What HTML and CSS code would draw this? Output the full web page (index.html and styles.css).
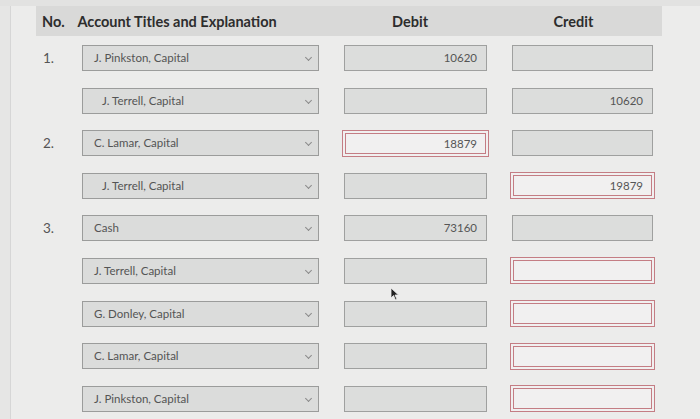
FILE: index.html
```html
<!DOCTYPE html>
<html>
<head>
<meta charset="utf-8">
<link rel="stylesheet" href="styles.css">
</head>
<body>
<div class="topband"></div>
<div class="page">
  <div class="sidebar"></div>
  <div class="sheet">
    <div class="head">
      <div class="h-no">No.</div>
      <div class="h-acct">Account Titles and Explanation</div>
      <div class="h-dr">Debit</div>
      <div class="h-cr">Credit</div>
    </div>

    <div class="rows">
      <div class="row">
        <div class="c-no">1.</div>
        <div class="c-acct"><div class="sel">J. Pinkston, Capital<span class="chev"></span></div></div>
        <div class="c-dr"><div class="inp">10620</div></div>
        <div class="c-cr"><div class="inp"></div></div>
      </div>
      <div class="row">
        <div class="c-no"></div>
        <div class="c-acct"><div class="sel ind">J. Terrell, Capital<span class="chev"></span></div></div>
        <div class="c-dr"><div class="inp"></div></div>
        <div class="c-cr"><div class="inp">10620</div></div>
      </div>

      <div class="row">
        <div class="c-no">2.</div>
        <div class="c-acct"><div class="sel">C. Lamar, Capital<span class="chev"></span></div></div>
        <div class="c-dr"><div class="inp err">18879</div></div>
        <div class="c-cr"><div class="inp"></div></div>
      </div>
      <div class="row">
        <div class="c-no"></div>
        <div class="c-acct"><div class="sel ind">J. Terrell, Capital<span class="chev"></span></div></div>
        <div class="c-dr"><div class="inp"></div></div>
        <div class="c-cr"><div class="inp err">19879</div></div>
      </div>

      <div class="row">
        <div class="c-no">3.</div>
        <div class="c-acct"><div class="sel">Cash<span class="chev"></span></div></div>
        <div class="c-dr"><div class="inp">73160</div></div>
        <div class="c-cr"><div class="inp"></div></div>
      </div>
      <div class="row">
        <div class="c-no"></div>
        <div class="c-acct"><div class="sel">J. Terrell, Capital<span class="chev"></span></div></div>
        <div class="c-dr"><div class="inp"></div></div>
        <div class="c-cr"><div class="inp err"></div></div>
      </div>
      <div class="row">
        <div class="c-no"></div>
        <div class="c-acct"><div class="sel">G. Donley, Capital<span class="chev"></span></div></div>
        <div class="c-dr"><div class="inp"></div></div>
        <div class="c-cr"><div class="inp err"></div></div>
      </div>
      <div class="row">
        <div class="c-no"></div>
        <div class="c-acct"><div class="sel">C. Lamar, Capital<span class="chev"></span></div></div>
        <div class="c-dr"><div class="inp"></div></div>
        <div class="c-cr"><div class="inp err"></div></div>
      </div>
      <div class="row">
        <div class="c-no"></div>
        <div class="c-acct"><div class="sel">J. Pinkston, Capital<span class="chev"></span></div></div>
        <div class="c-dr"><div class="inp"></div></div>
        <div class="c-cr"><div class="inp err"></div></div>
      </div>
    </div>
  </div>
</div>
<svg class="cursor" width="10" height="14" viewBox="0 0 10 14"><path d="M1 1 L1 11 L3.5 8.5 L5.5 13 L7 12.3 L5 8 L8.5 8 Z" fill="#222" stroke="#eee" stroke-width="0.8"/></svg>
</body>
</html>
```

FILE: styles.css
```css
html, body {
  margin: 0;
  padding: 0;
}
body {
  width: 700px;
  height: 419px;
  overflow: hidden;
  background: #ececeb;
  font-family: Lato, "Open Sans", sans-serif;
  position: relative;
}
.topband {
  height: 6px;
  background: #e2e2e1;
}
.page {
  display: flex;
}
.sidebar {
  width: 10px;
  margin-right: 25px;
  border-right: 1px solid #d6d6d6;
  background: #e6e6e5;
  height: 413px;
}
.sheet {
  width: 626px;
}
.head {
  display: flex;
  align-items: center;
  height: 30px;
  background: #d9d9d8;
  font-weight: 700;
  font-size: 14.5px;
  color: #2d2d2d;
}
.h-no {
  width: 42px;
  padding-left: 6px;
  box-sizing: border-box;
}
.h-acct {
  width: 262px;
}
.h-dr, .h-cr {
  text-align: center;
}
.h-dr { width: 152px; }
.h-cr { width: 180px; }

.rows {
  padding-top: 9px;
  display: flex;
  flex-direction: column;
  gap: 16.6px;
}
.row {
  display: flex;
  align-items: center;
  height: 26px;
}
.c-no {
  width: 46px;
  padding-left: 7px;
  box-sizing: border-box;
  font-size: 13.5px;
  color: #555;
}
.c-acct {
  width: 262px;
}
.c-dr {
  width: 168px;
}
.c-cr {
  width: 141px;
}
.sel {
  position: relative;
  width: 237px;
  height: 26px;
  box-sizing: border-box;
  border: 1px solid #9b9c9b;
  background: #dbdcdb;
  font-size: 11.5px;
  color: #545454;
  line-height: 24px;
  padding-left: 11px;
}
.sel.ind {
  padding-left: 19px;
}
.chev {
  position: absolute;
  right: 7px;
  top: 9px;
  width: 4px;
  height: 4px;
  border-right: 1.3px solid #8a8a8a;
  border-bottom: 1.3px solid #8a8a8a;
  transform: rotate(45deg);
}
.inp {
  width: 143px;
  height: 26px;
  box-sizing: border-box;
  border: 1px solid #9fa09f;
  background: #dcdddc;
  font-size: 11.5px;
  color: #555;
  line-height: 24px;
  text-align: right;
  padding-right: 9px;
}
.c-cr .inp {
  width: 141px;
}
.inp.err {
  border: 4px double #c47d84;
  background: #f1f0f0;
  margin: 0 -2px;
  width: 147px;
  height: 27px;
  line-height: 19px;
  padding-right: 8px;
}
.c-cr .inp.err {
  width: 145px;
}
.cursor {
  position: absolute;
  left: 390px;
  top: 287px;
}
```
